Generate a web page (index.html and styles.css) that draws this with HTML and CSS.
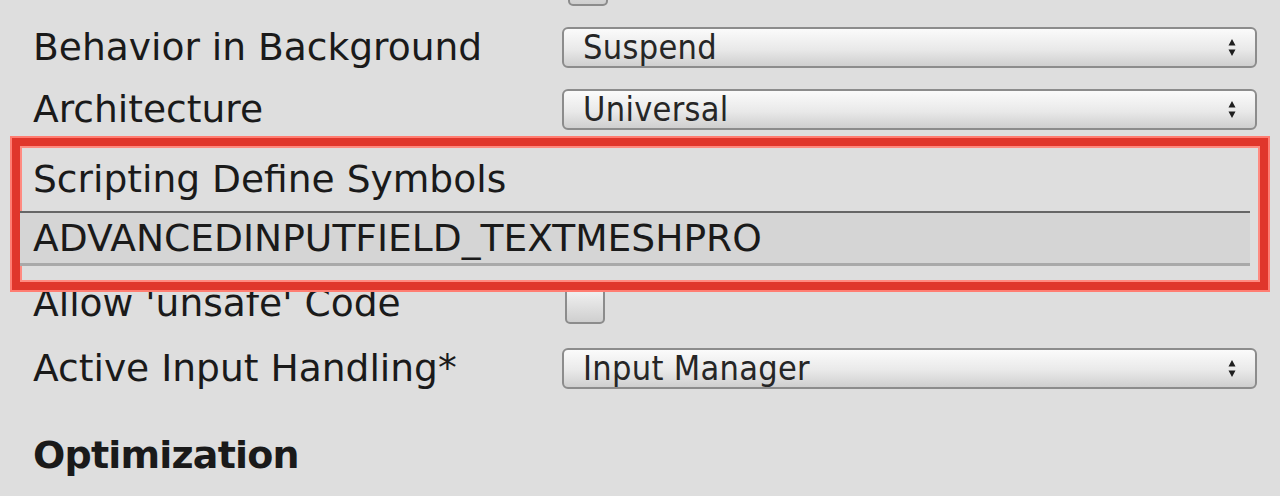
FILE: index.html
```html
<!DOCTYPE html>
<html lang="en">
<head>
    <meta charset="UTF-8" />
    <title>Player Settings</title>
    <link rel="stylesheet" href="styles.css">
</head>
<body>
    <div class="stub-row">
        <span class="checkbox"></span>
    </div>

    <div class="row">
        <span class="label">Behavior in Background</span>
        <div class="popup">
            <span>Suspend</span>
            <svg class="arrows" viewBox="0 0 8 18"><path d="M4 0.5 L7.5 7 L0.5 7 Z M4 17.5 L7.5 11 L0.5 11 Z" /></svg>
        </div>
    </div>
    <div class="row">
        <span class="label">Architecture</span>
        <div class="popup">
            <span>Universal</span>
            <svg class="arrows" viewBox="0 0 8 18"><path d="M4 0.5 L7.5 7 L0.5 7 Z M4 17.5 L7.5 11 L0.5 11 Z" /></svg>
        </div>
    </div>

    <!-- highlighted block -->
    <div class="highlight">
        <div class="define-label">Scripting Define Symbols</div>
        <div class="define-field">ADVANCEDINPUTFIELD_TEXTMESHPRO</div>
        <div class="define-foot"></div>
    </div>

    <div class="row row-allow">
        <span class="label">Allow 'unsafe' Code</span>
        <span class="checkbox"></span>
    </div>
    <div class="row row-input">
        <span class="label">Active Input Handling*</span>
        <div class="popup">
            <span>Input Manager</span>
            <svg class="arrows" viewBox="0 0 8 18"><path d="M4 0.5 L7.5 7 L0.5 7 Z M4 17.5 L7.5 11 L0.5 11 Z" /></svg>
        </div>
    </div>

    <h3 class="section">Optimization</h3>
</body>
</html>
```

FILE: styles.css
```css
/* Global Styling */
body {
    margin: 0;
    padding: 0 23px 0 33px;
    background: #dedede;
    color: #1a1a1a;
    font-family: "DejaVu Sans", Verdana, sans-serif;
    font-size: 37.6px;
    height: 496px;
    box-sizing: border-box;
    overflow: hidden;
}

.stub-row {
    height: 16px;
    display: flex;
    padding-left: 532px;
    align-items: flex-start;
}

.stub-row .checkbox {
    margin-top: -34px;
}

/* Rows */
.row {
    display: flex;
    align-items: center;
    height: 62px;
}

.label {
    width: 529px;
    flex-shrink: 0;
    white-space: nowrap;
}

/* Popup */
.popup {
    flex: 1;
    height: 41px;
    box-sizing: border-box;
    border: 2px solid #8c8c8c;
    border-radius: 6px;
    background: linear-gradient(#fbfbfb, #e9e9e9 55%, #cfcfcf);
    display: flex;
    align-items: center;
    justify-content: space-between;
    padding: 0 19px 0 19px;
    font-family: "DejaVu Sans Condensed", "DejaVu Sans", sans-serif;
    font-size: 34px;
    letter-spacing: 0.3px;
    color: #262626;
}

.arrows {
    width: 8px;
    height: 19px;
    fill: #1e1e1e;
}

.checkbox {
    display: block;
    width: 40px;
    height: 40px;
    margin-left: 3px;
    box-sizing: border-box;
    border: 2px solid #8c8c8c;
    border-radius: 5px;
    background: linear-gradient(#f6f6f6, #cfcfcf);
}

/* Highlight Box */
.highlight {
    position: relative;
    z-index: 2;
    margin: -2px -11px -19px -21px;
    border: 8px solid #e0362b;
    box-shadow: 0 0 0 2px #ff7d72, inset 0 0 0 2px #ff8a80;
    height: 152px;
    box-sizing: border-box;
}

.define-label {
    height: 65px;
    display: flex;
    align-items: center;
    padding-left: 13px;
}

.define-field {
    height: 50px;
    border-top: 2px solid #666;
    background: #d5d5d5;
    display: flex;
    align-items: center;
    padding-left: 13px;
    margin-right: 10px;
}

.define-foot {
    height: 0;
    border-top: 3px solid #a9a9a9;
    margin-right: 10px;
}

.row-allow {
    height: 64px;
}

.row-allow .checkbox {
    margin-top: 2px;
}

.row-input {
    height: 66px;
}

.section {
    margin: 32px 0 0;
    font-size: 38px;
    font-weight: bold;
    letter-spacing: -0.8px;
}
```
